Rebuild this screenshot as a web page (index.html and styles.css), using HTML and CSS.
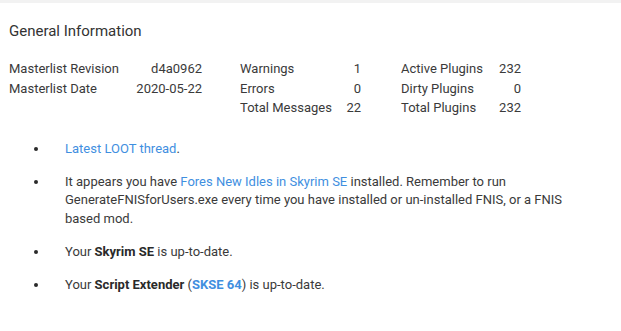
FILE: index.html
```html
<!DOCTYPE html>
<html lang="en">
<head>
    <meta charset="UTF-8">
    <title>General Information</title>
    <link rel="stylesheet" href="styles.css">
</head>
<body>
    <div class="top-strip"></div>
    <section class="general-info">
        <h2>General Information</h2>
        <div class="summary">
            <table class="summary-table masterlist">
                <tr><td>Masterlist Revision</td><td class="num">d4a0962</td></tr>
                <tr><td>Masterlist Date</td><td class="num">2020-05-22</td></tr>
            </table>
            <table class="summary-table messages-count">
                <tr><td>Warnings</td><td class="num">1</td></tr>
                <tr><td>Errors</td><td class="num">0</td></tr>
                <tr><td>Total Messages</td><td class="num">22</td></tr>
            </table>
            <table class="summary-table plugins-count">
                <tr><td>Active Plugins</td><td class="num">232</td></tr>
                <tr><td>Dirty Plugins</td><td class="num">0</td></tr>
                <tr><td>Total Plugins</td><td class="num">232</td></tr>
            </table>
        </div>
        <ul class="message-list">
            <li><span><a href="#">Latest LOOT thread</a>.</span></li>
            <li><span>It appears you have <a href="#">Fores New Idles in Skyrim SE</a> installed. Remember to run GenerateFNISforUsers.exe every time you have installed or un-installed FNIS, or a FNIS based mod.</span></li>
            <li><span>Your <strong>Skyrim SE</strong> is up-to-date.</span></li>
            <li><span>Your <strong>Script Extender</strong> (<a href="#"><strong>SKSE 64</strong></a>) is up-to-date.</span></li>
        </ul>
    </section>
</body>
</html>
```

FILE: styles.css
```css
* {
    margin: 0;
    padding: 0;
    box-sizing: border-box;
}
body {
    font-family: 'Roboto', 'Liberation Sans', sans-serif;
    font-size: 13px;
    color: #3a3a3a;
    background: #ffffff;
}
.top-strip {
    height: 3px;
    background: #f2f2f2;
}
.general-info {
    padding: 18px 9px 0 9px;
}
h2 {
    font-size: 15px;
    font-weight: 400;
    line-height: 20px;
    color: #333333;
}
.summary {
    display: flex;
    align-items: flex-start;
    margin-top: 18px;
}
.summary-table {
    border-collapse: collapse;
    line-height: 19.5px;
}
.summary-table td {
    padding: 0;
    white-space: nowrap;
}
.summary-table td.num {
    text-align: right;
}
.masterlist {
    width: 193px;
    margin-right: 38px;
}
.messages-count {
    width: 121px;
    margin-right: 40px;
}
.plugins-count {
    width: 120px;
}
.message-list {
    list-style: none;
    margin-top: 22px;
    padding-right: 30px;
    line-height: 18.5px;
}
.message-list li {
    display: flex;
    align-items: flex-start;
    margin-bottom: 14.5px;
}
.message-list li::before {
    content: "";
    flex: none;
    width: 4px;
    height: 4px;
    border-radius: 50%;
    background: #2a2a2a;
    margin: 7px 27px 0 25px;
}
.message-list a {
    color: #3f8fdf;
    text-decoration: none;
}
.message-list strong {
    font-weight: 700;
    color: #2a2a2a;
}
.message-list a strong {
    color: #3f8fdf;
}
```
